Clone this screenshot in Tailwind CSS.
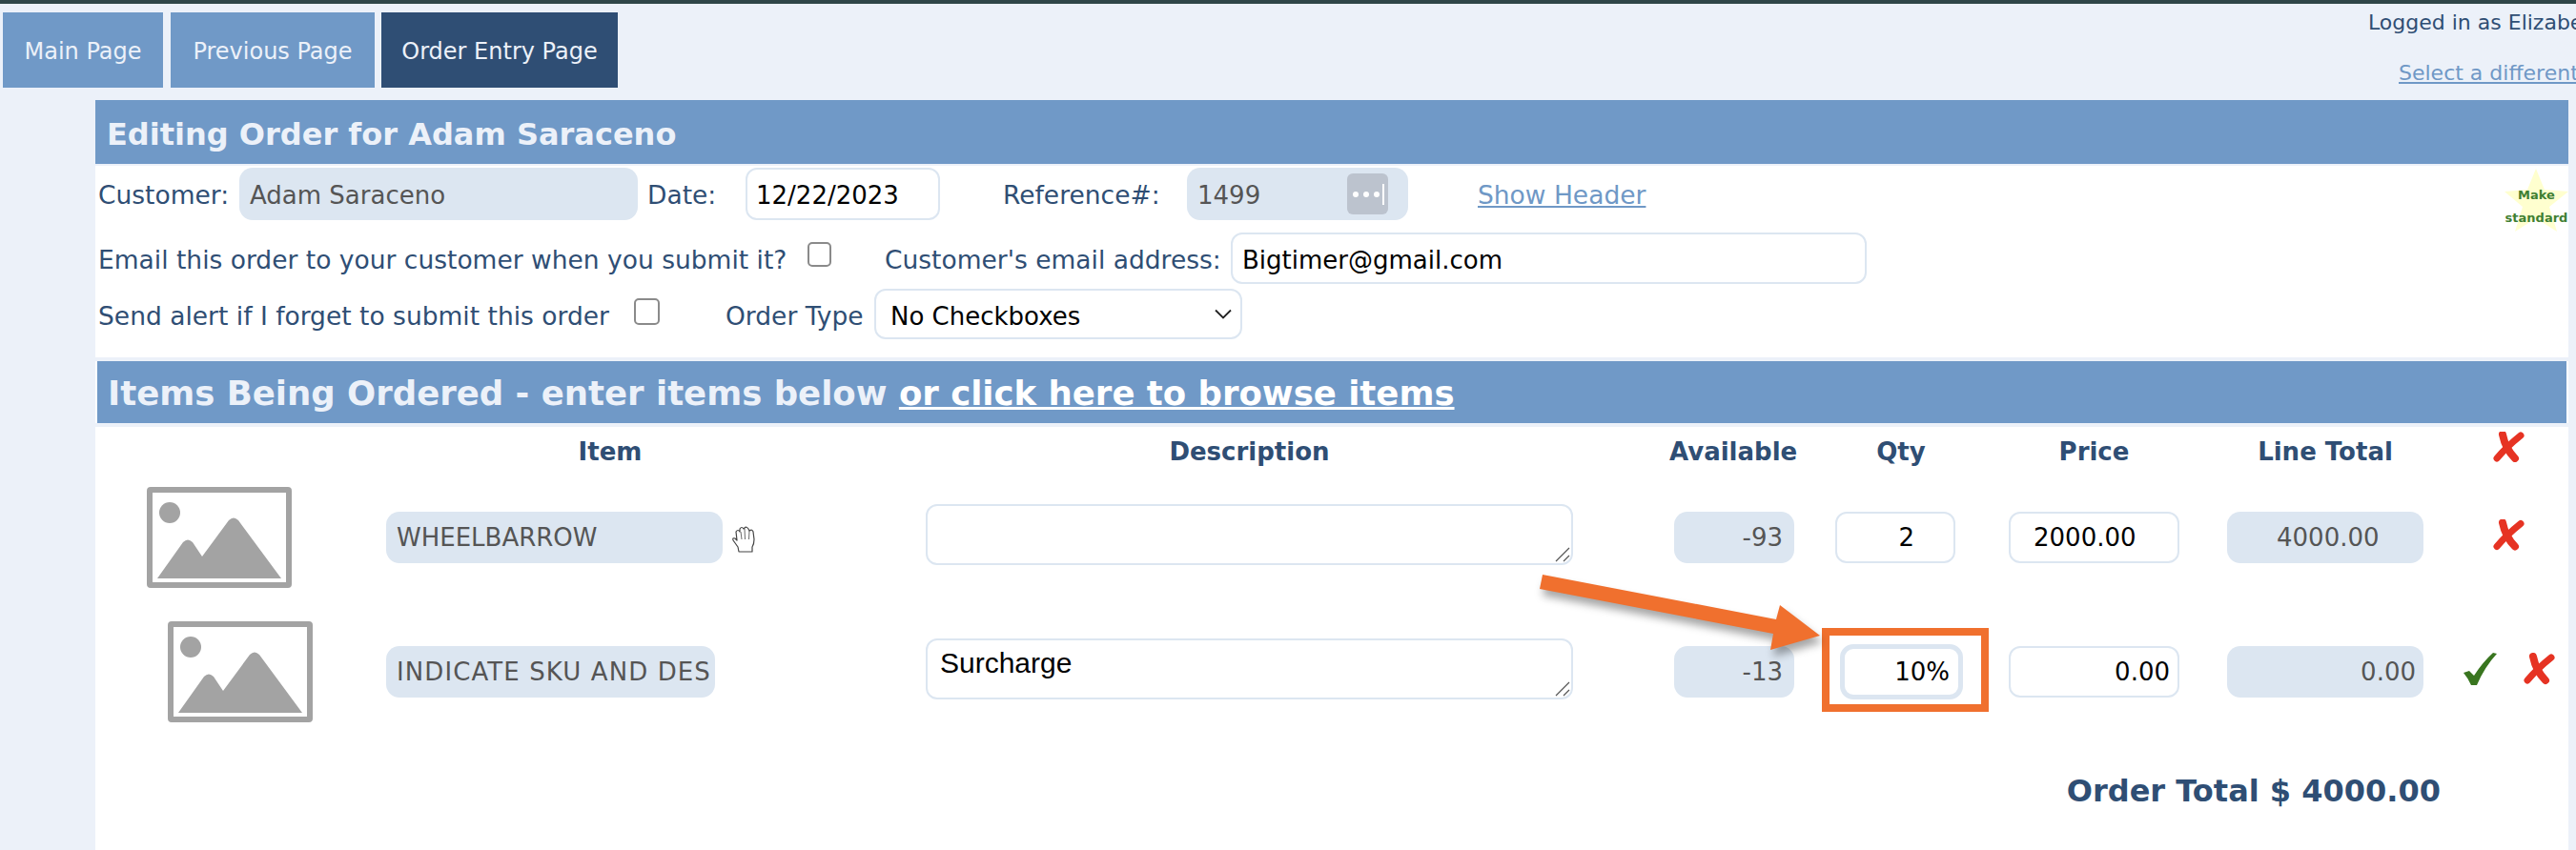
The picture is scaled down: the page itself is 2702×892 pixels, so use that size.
<!DOCTYPE html>
<html>
<head>
<meta charset="utf-8">
<script src="https://cdn.jsdelivr.net/npm/@tailwindcss/browser@4"></script>
</head>
<body class="relative w-[2702px] h-[892px] overflow-hidden bg-[#ecf1f9] text-[#2f4e74] text-[26.5px] font-['DejaVu_Sans',sans-serif]">
  <div class="h-1 bg-[#2f4648]"></div>

  <header class="flex h-[101px]">
    <nav class="flex items-start pt-[9px] pl-[3px] text-[24px] text-[#ecf1f9]">
      <div class="w-[168px] h-[79px] pt-[2px] flex items-center justify-center bg-[#7099c7]">Main Page</div>
      <div class="w-[214px] h-[79px] pt-[2px] ml-2 flex items-center justify-center bg-[#7099c7]">Previous Page</div>
      <div class="w-[248px] h-[79px] pt-[2px] ml-[7px] flex items-center justify-center bg-[#2f4e74]">Order Entry Page</div>
    </nav>
    <div class="ml-[1836px] w-[218px] overflow-hidden whitespace-nowrap text-[22px]">
      <div class="h-[40px] leading-[40px]">Logged in as Elizabeth</div>
      <div class="mt-[16px] pl-[32px] text-[#6f98c6] underline">Select a different user</div>
    </div>
  </header>

  <main class="ml-[100px] w-[2594px] h-[787px] bg-white">
    <h1 class="h-[69px] border-b-2 border-[#ecf1f9] bg-[#7099c7] pl-3 text-[32px] leading-[72px] font-bold text-[#ecf1f9]">Editing Order for Adam Saraceno</h1>

    <div class="relative h-[199px] leading-[32px]">
      <div class="flex items-center h-[55px] mt-[2px] pt-0">
        <span class="ml-[3px] w-[148px] pt-[2px]">Customer:</span>
        <div class="w-[418px] h-[55px] pl-[11px] pt-[2px] flex items-center rounded-[14px] bg-[#dce6f1] text-[#555555] text-[26px]">Adam Saraceno</div>
        <span class="ml-[10px] w-[103px] pt-[2px]">Date:</span>
        <div class="w-[204px] h-[55px] pl-[9px] pt-[2px] flex items-center rounded-[12px] border-2 border-[#dce6f1] text-black text-[26px]">12/22/2023</div>
        <span class="ml-[66px] w-[193px] pt-[2px] whitespace-nowrap">Reference#:</span>
        <div class="w-[232px] h-[55px] pl-[11px] pr-[21px] flex items-center justify-between rounded-[14px] bg-[#dce6f1] text-[#555555] text-[26px]">
          <span class="pt-[2px]">1499</span>
          <div class="w-[43px] h-[43px] rounded-[6px] bg-[#bcc3ce] flex items-center justify-center">
            <svg width="36" height="24" viewBox="0 0 36 24"><circle cx="5" cy="12" r="3" fill="#fff"/><circle cx="16" cy="12" r="3" fill="#fff"/><circle cx="27" cy="12" r="3" fill="#fff"/><rect x="33" y="1" width="2" height="22" fill="#fff"/></svg>
          </div>
        </div>
        <span class="ml-[73px] pt-[2px] text-[#6f98c6] underline whitespace-nowrap">Show Header</span>
      </div>

      <div class="flex items-center h-[54px] mt-[13px]">
        <span class="ml-[3px] w-[744px] pt-[4px] whitespace-nowrap">Email this order to your customer when you submit it?</span>
        <input type="checkbox" class="appearance-none w-[25px] h-[26px] -mt-[9px] rounded-[5px] border-2 border-[#8a8a8a] bg-white">
        <span class="ml-[56px] w-[363px] pt-[4px] whitespace-nowrap">Customer's email address:</span>
        <div class="w-[667px] h-[54px] pl-[10px] pt-[4px] flex items-center rounded-[12px] border-2 border-[#dce6f1] text-black text-[26px]">Bigtimer@gmail.com</div>
      </div>

      <div class="flex items-center h-[53px] mt-[5px]">
        <span class="ml-[3px] w-[562px] pt-[4px] whitespace-nowrap">Send alert if I forget to submit this order</span>
        <input type="checkbox" class="appearance-none w-[27px] h-[28px] -mt-[5px] rounded-[5px] border-2 border-[#8a8a8a] bg-white">
        <span class="ml-[69px] w-[156px] pt-[4px] whitespace-nowrap">Order Type</span>
        <div class="w-[386px] h-[53px] pl-[15px] pr-[9px] flex items-center justify-between rounded-[12px] border-2 border-[#dce6f1] text-black text-[26px]">
          <span class="pt-[4px]">No Checkboxes</span>
          <svg width="18" height="11" viewBox="0 0 18 11" fill="none" stroke="#222" stroke-width="1.8"><path d="M1 1.5 L9 9.5 L17 1.5"/></svg>
        </div>
      </div>

      <div class="absolute left-[2527px] top-[1px] w-[67px] h-[66px]">
        <svg class="absolute inset-0" width="67" height="66" viewBox="0 0 67 66"><polygon points="33,0 42,22 67,24 47,40 55,66 33,52 11,66 19,40 0,24 24,22" fill="#ffffcf"/></svg>
        <div class="absolute left-0 top-[20px] w-[67px] text-center text-[13px] leading-[16px] font-bold text-[#3f7f33]">Make</div>
        <div class="absolute left-0 top-[44px] w-[67px] text-center text-[13px] leading-[16px] font-bold text-[#3f7f33]">standard</div>
      </div>
    </div>

    <div class="h-1 bg-[#ecf1f9]"></div>
    <h2 class="ml-[2px] w-[2590px] h-[65px] bg-[#7099c7] pl-[11px] text-[35.5px] leading-[67px] font-bold text-[#ecf1f9] whitespace-nowrap">Items Being Ordered - enter items below <span class="underline text-white">or click here to browse items</span></h2>
    <div class="h-1 bg-[#ecf1f9]"></div>

    <div class="flex h-[63px] font-bold text-center text-[26px] items-center pb-[11px]">
      <span class="ml-[305px] w-[470px]">Item</span>
      <span class="ml-[96px] w-[679px]">Description</span>
      <span class="ml-[101px] w-[126px] whitespace-nowrap">Available</span>
      <span class="ml-[48px] w-[126px] pl-[12px]">Qty</span>
      <span class="ml-[56px] w-[179px]">Price</span>
      <span class="ml-[50px] w-[206px] whitespace-nowrap">Line Total</span>
      <svg class="ml-[73px] -mt-[10px]" width="33" height="32" viewBox="0 0 33 32"><path d="M4 28 Q14 16 29 4" fill="none" stroke="#e63323" stroke-width="7" stroke-linecap="round"/><path d="M10 3 Q13 18 23 28" fill="none" stroke="#e63323" stroke-width="8" stroke-linecap="round"/></svg>
    </div>

    <div class="flex items-center h-[106px] text-[26px]">
      <svg class="ml-[54px]" width="152" height="106" viewBox="0 0 152 106">
        <rect x="3" y="3" width="146" height="100" rx="1" fill="#fff" stroke="#a3a3a3" stroke-width="6"/>
        <circle cx="24" cy="27" r="11" fill="#a3a3a3"/>
        <path d="M11 96 L38 58 Q43 53 48 58 L58 73 L86 35 Q91 30 96 35 L141 96 Z" fill="#a3a3a3"/>
      </svg>
      <div class="ml-[99px] w-[353px] h-[54px] pl-[11px] flex items-center rounded-[14px] bg-[#dce6f1] text-[#555555]">WHEELBARROW</div>
      <svg class="ml-[9px] mt-[4px]" width="27" height="28" viewBox="0 0 27 28" fill="#fff" stroke="#444" stroke-width="1.2" stroke-linejoin="round"><path d="M8 27 L7 22 L2 15 Q1 12 4 13 L6 15 L5 6 Q7 3 9 6 L9 3 Q11 0 13 3 L14 2 Q16 0 18 3 L19 5 Q22 3 23 6 L24 14 Q24 19 22 22 L22 27 Z"/><path d="M10 6 L11 14 M14 3 L14.5 14 M19 5 L18.5 14" fill="none" stroke-width="0.8"/></svg>
      <div class="relative ml-[177px] -mt-[6px] w-[679px] h-[64px] rounded-[12px] border-2 border-[#dce6f1]">
        <svg class="absolute right-[1px] bottom-[1px]" width="16" height="16" viewBox="0 0 16 16" stroke="#555" stroke-width="1.2"><path d="M1 15 L15 1 M9 15 L15 9"/></svg>
      </div>
      <div class="ml-[106px] w-[126px] h-[54px] pr-[12px] flex items-center justify-end rounded-[14px] bg-[#dce6f1] text-[#555555]">-93</div>
      <div class="ml-[43px] w-[126px] h-[54px] pr-[41px] flex items-center justify-end rounded-[12px] border-2 border-[#dce6f1] text-black">2</div>
      <div class="ml-[56px] w-[179px] h-[54px] pl-[24px] flex items-center rounded-[12px] border-2 border-[#dce6f1] text-black">2000.00</div>
      <div class="ml-[50px] w-[206px] h-[54px] pl-[52px] flex items-center rounded-[14px] bg-[#dce6f1] text-[#555555]">4000.00</div>
      <svg class="ml-[73px] -mt-[5px]" width="33" height="33" viewBox="0 0 33 32"><path d="M4 28 Q14 16 29 4" fill="none" stroke="#e63323" stroke-width="7" stroke-linecap="round"/><path d="M10 3 Q13 18 23 28" fill="none" stroke="#e63323" stroke-width="8" stroke-linecap="round"/></svg>
    </div>

    <div class="flex items-center h-[106px] mt-[35px] text-[26px]">
      <svg class="ml-[76px]" width="152" height="106" viewBox="0 0 152 106">
        <rect x="3" y="3" width="146" height="100" rx="1" fill="#fff" stroke="#a3a3a3" stroke-width="6"/>
        <circle cx="24" cy="27" r="11" fill="#a3a3a3"/>
        <path d="M11 96 L38 58 Q43 53 48 58 L58 73 L86 35 Q91 30 96 35 L141 96 Z" fill="#a3a3a3"/>
      </svg>
      <div class="ml-[77px] w-[345px] h-[54px] pl-[11px] flex items-center rounded-[14px] bg-[#dce6f1] text-[#555555] whitespace-nowrap tracking-[1.1px]">INDICATE SKU AND DES</div>
      <div class="relative ml-[221px] -mt-[6px] w-[679px] h-[64px] pl-[13px] pt-[6px] rounded-[12px] border-2 border-[#dce6f1] text-black text-[30px] leading-[36px] font-['Liberation_Sans',sans-serif]">Surcharge
        <svg class="absolute right-[1px] bottom-[1px]" width="16" height="16" viewBox="0 0 16 16" stroke="#555" stroke-width="1.2"><path d="M1 15 L15 1 M9 15 L15 9"/></svg>
      </div>
      <div class="ml-[106px] w-[126px] h-[54px] pr-[12px] flex items-center justify-end rounded-[14px] bg-[#dce6f1] text-[#555555]">-13</div>
      <div class="relative ml-[48px] w-[129px] h-[58px] pr-[9px] flex items-center justify-end rounded-[14px] border-[5px] border-[#dce6f1] text-black">10%
        <div class="absolute -left-[24px] -top-[22px] w-[175px] h-[88px] border-[8px] border-[#f0702e]"></div>
      </div>
      <div class="ml-[48px] w-[179px] h-[54px] pr-[8px] flex items-center justify-end rounded-[12px] border-2 border-[#dce6f1] text-black">0.00</div>
      <div class="ml-[50px] w-[206px] h-[54px] pr-[8px] flex items-center justify-end rounded-[14px] bg-[#dce6f1] text-[#555555]">0.00</div>
      <svg class="ml-[42px] -mt-[6px]" width="35" height="34" viewBox="0 0 35 34"><path d="M0 21 L6 19 L11 24 Q20 10 31 0 L35 1 Q22 15 14 34 L8 34 Q5 27 0 21 Z" fill="#39751f"/></svg>
      <svg class="ml-[28px] -mt-[6px]" width="33" height="34" viewBox="0 0 33 32"><path d="M4 28 Q14 16 29 4" fill="none" stroke="#e63323" stroke-width="7" stroke-linecap="round"/><path d="M10 3 Q13 18 23 28" fill="none" stroke="#e63323" stroke-width="8" stroke-linecap="round"/></svg>
    </div>

    <div class="mt-[52px] w-[2460px] h-[40px] text-right text-[32px] leading-[40px] font-bold">Order Total $ 4000.00</div>
  </main>

  <svg class="absolute left-[1600px] top-[590px] drop-shadow-[3px_7px_4px_rgba(0,0,0,0.35)]" width="320" height="100" viewBox="0 0 320 100">
    <polygon points="18,13 263,60 267,45 309,77 257,92 260,75 15,28" fill="#f0702e"/>
  </svg>
</body>
</html>
